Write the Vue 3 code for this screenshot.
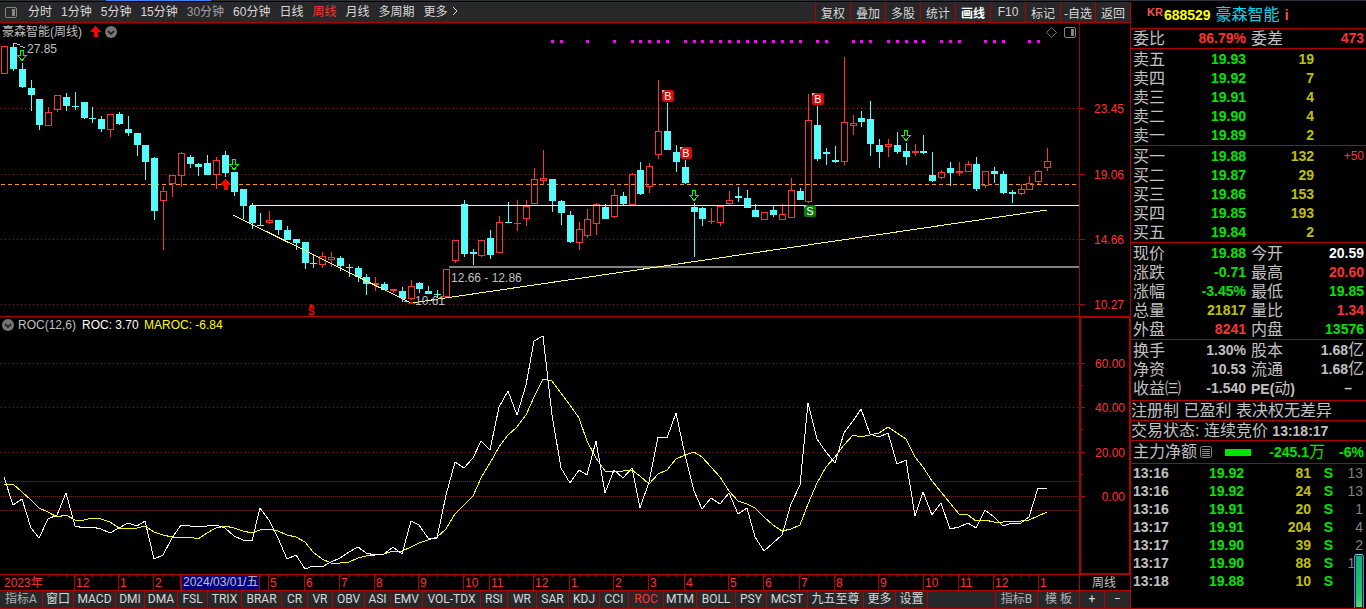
<script setup>
const periods = ['分时', '1分钟', '5分钟', '15分钟', '30分钟', '60分钟', '日线', '周线', '月线', '多周期']
const tools = ['复权', '叠加', '多股', '统计', '画线', 'F10', '标记', '-自选', '返回']

// Bar index to horizontal centre
const bx = (i) => Math.round(4 + i * 8.84)

// [rising, high, body top, body bottom, low]
const bars = [
  [1, 46, 46, 74, 74], [0, 44, 47, 69, 71], [0, 63, 69, 87, 88], [0, 80, 88, 95, 111], [0, 99, 99, 125, 130],
  [1, 107, 112, 126, 126], [1, 95, 95, 110, 112], [0, 93, 97, 106, 111], [0, 92, 106, 107, 110], [0, 102, 102, 118, 119],
  [0, 107, 118, 119, 123], [0, 116, 119, 129, 132], [1, 114, 114, 130, 137], [0, 112, 114, 124, 125], [0, 116, 129, 133, 136],
  [0, 133, 133, 145, 156], [0, 145, 145, 162, 180], [0, 157, 158, 211, 220], [1, 186, 191, 201, 250], [1, 175, 175, 184, 197],
  [1, 152, 153, 176, 187], [0, 155, 157, 164, 168], [0, 163, 164, 167, 176], [0, 155, 163, 175, 175], [1, 157, 160, 175, 189],
  [0, 151, 155, 173, 177], [0, 172, 172, 192, 196], [0, 189, 189, 206, 219], [0, 203, 206, 223, 229], [0, 213, 225, 226, 226],
  [1, 211, 220, 223, 224], [0, 220, 220, 230, 235], [0, 226, 230, 240, 240], [0, 239, 239, 243, 250], [0, 242, 242, 263, 269],
  [0, 254, 263, 264, 268], [1, 252, 256, 265, 268], [1, 252, 257, 260, 267], [0, 256, 258, 266, 271], [0, 264, 267, 268, 277],
  [0, 266, 268, 277, 282], [0, 274, 277, 284, 295], [1, 277, 283, 285, 291], [0, 282, 284, 290, 290], [1, 289, 289, 291, 293],
  [0, 287, 291, 298, 300], [1, 280, 286, 299, 300], [0, 282, 283, 289, 293], [0, 286, 291, 294, 294], [0, 290, 294, 295, 298],
  [1, 269, 269, 297, 297], [1, 240, 240, 261, 263], [0, 200, 204, 254, 257], [0, 249, 252, 254, 265], [1, 240, 240, 256, 257],
  [0, 230, 238, 255, 259], [1, 216, 222, 253, 253], [0, 202, 222, 223, 223], [1, 200, 223, 224, 231], [1, 200, 206, 219, 226],
  [1, 168, 179, 204, 204], [1, 150, 178, 181, 185], [0, 179, 179, 201, 212], [0, 200, 201, 213, 225], [0, 211, 215, 242, 243],
  [1, 222, 229, 243, 250], [1, 209, 219, 236, 238], [1, 203, 204, 224, 235], [0, 204, 207, 219, 219], [1, 189, 195, 217, 218],
  [0, 192, 196, 204, 205], [1, 173, 174, 205, 205], [0, 162, 170, 194, 195], [1, 163, 166, 187, 193], [1, 80, 131, 155, 159],
  [0, 103, 131, 150, 150], [0, 145, 152, 162, 172], [0, 160, 167, 183, 184], [0, 203, 207, 212, 257], [0, 207, 208, 219, 226],
  [1, 208, 221, 222, 224], [1, 205, 206, 223, 226], [1, 191, 200, 204, 206], [0, 187, 196, 198, 202], [0, 190, 198, 208, 208],
  [0, 204, 210, 217, 217], [1, 212, 212, 220, 220], [0, 206, 210, 215, 217], [1, 204, 214, 220, 220], [1, 178, 190, 218, 218],
  [0, 188, 191, 200, 200], [1, 94, 120, 202, 203], [0, 106, 125, 159, 161], [0, 148, 152, 154, 165], [0, 146, 160, 162, 163],
  [1, 57, 122, 162, 165], [1, 115, 123, 126, 135], [0, 111, 118, 122, 127], [0, 101, 119, 144, 156], [0, 139, 145, 152, 168],
  [1, 139, 144, 147, 157], [0, 132, 145, 152, 154], [0, 143, 151, 157, 165], [1, 144, 151, 153, 156], [0, 135, 151, 153, 154],
  [0, 152, 175, 181, 182], [1, 170, 172, 178, 179], [0, 162, 168, 173, 186], [1, 162, 171, 173, 176], [1, 161, 164, 172, 172],
  [0, 157, 164, 189, 191], [1, 171, 171, 186, 188], [0, 167, 171, 174, 183], [0, 171, 174, 193, 194], [0, 190, 192, 194, 203],
  [1, 184, 189, 194, 195], [1, 176, 183, 190, 190], [1, 170, 171, 182, 184], [1, 148, 161, 168, 171],
].map(([up, high, top, bottom, low], i) => ({ up, high, top, bottom, low, x: bx(i) }))

const roc = [477, 505, 499, 528, 538, 519, 515, 493, 526, 528, 527, 529, 533, 528, 523, 526, 521, 559, 555, 538,
  525, 526, 527, 526, 525, 528, 536, 540, 541, 508, 520, 538, 559, 555, 569, 566, 567, 562, 558, 552,
  547, 553, 555, 554, 547, 554, 521, 525, 538, 538, 495, 462, 468, 458, 441, 450, 407, 391, 415, 385,
  341, 336, 415, 468, 483, 470, 475, 441, 493, 470, 478, 468, 508, 482, 437, 438, 413, 455, 491, 509,
  498, 504, 493, 514, 508, 537, 551, 543, 535, 504, 485, 403, 439, 452, 463, 433, 421, 409, 434, 437,
  433, 464, 460, 516, 492, 515, 503, 529, 527, 523, 528, 510, 517, 526, 523, 523, 517, 488, 488]
const maroc = [485, 484, 492, 500, 508, 512, 517, 515, 520, 520, 518, 519, 522, 528, 528, 528, 526, 532, 535, 537,
  537, 537, 539, 533, 528, 526, 528, 531, 533, 530, 529, 531, 535, 537, 542, 552, 559, 563, 563, 562,
  558, 556, 555, 554, 551, 551, 547, 543, 540, 537, 529, 514, 505, 496, 478, 463, 447, 435, 427, 415,
  397, 379, 381, 393, 405, 418, 441, 458, 471, 472, 471, 470, 476, 484, 474, 470, 459, 455, 452, 457,
  467, 477, 491, 501, 504, 508, 517, 525, 531, 529, 525, 504, 483, 467, 457, 445, 435, 437, 435, 433,
  427, 433, 439, 457, 467, 481, 492, 503, 514, 515, 521, 520, 522, 522, 521, 521, 520, 516, 512]
const line = (values) => values.map((y, i) => `${bx(i)},${y}`).join(' ')

const signals = [62, 63, 66, 69, 71, 72, 73, 74, 75, 77, 78, 79, 80, 81, 82, 83, 84, 85, 86, 87, 88, 89, 90,
  92, 93, 96, 97, 98, 100, 101, 102, 103, 104, 106, 107, 108, 111, 112, 113, 116, 117]

const prices = [[108, '23.45'], [174, '19.06'], [239, '14.66'], [304, '10.27']]
const rocLevels = [[363, '60.00'], [407, '40.00'], [452, '20.00'], [496, '0.00']]
const badges = [[662, 90, 'B'], [680, 147, 'B'], [812, 93, 'B'], [804, 205, 'S']]
const downArrows = [[22, 50], [234, 159], [694, 190], [906, 130]]
const upArrows = [[95, 26], [225, 179]]

const months = [[74, '12'], [118, '1'], [153, '2'], [268, '5'], [304, '6'], [339, '7'], [374, '8'], [418, '9'],
  [463, '10'], [489, '11'], [533, '12'], [569, '1'], [613, '2'], [648, '3'], [684, '4'], [728, '5'], [763, '6'],
  [799, '7'], [834, '8'], [878, '9'], [923, '10'], [958, '11'], [993, '12'], [1038, '1']]

// [label, share of the bar's width]
const indicators = [['指标A', 43], ['窗口', 31], ['MACD', 42], ['DMI', 29], ['DMA', 33], ['FSL', 30], ['TRIX', 34],
  ['BRAR', 40], ['CR', 26], ['VR', 25], ['OBV', 32], ['ASI', 26], ['EMV', 32], ['VOL-TDX', 58], ['RSI', 27],
  ['WR', 29], ['SAR', 32], ['KDJ', 31], ['CCI', 29], ['ROC', 35], ['MTM', 33], ['BOLL', 39], ['PSY', 31],
  ['MCST', 41], ['九五至尊', 56], ['更多', 32], ['设置', 32], ['', 68], ['指标B', 42], ['模 板', 42], ['+', 25], ['−', 25]]
const indicatorColumns = indicators.map(([, w]) => `${w}fr`).join(' ')

const asks = [['卖五', '19.93', '19'], ['卖四', '19.92', '7'], ['卖三', '19.91', '4'], ['卖二', '19.90', '4'], ['卖一', '19.89', '2']]
const bids = [['买一', '19.88', '132', '+50'], ['买二', '19.87', '29'], ['买三', '19.86', '153'], ['买四', '19.85', '193'], ['买五', '19.84', '2']]
const books = [asks, bids]

const quotes = [
  ['现价', '19.88', 'green', '今开', '20.59', 'white'],
  ['涨跌', '-0.71', 'green', '最高', '20.60', 'red'],
  ['涨幅', '-3.45%', 'green', '最低', '19.85', 'green'],
  ['总量', '21817', 'yellow', '量比', '1.34', 'red'],
  ['外盘', '8241', 'red', '内盘', '13576', 'green'],
]
const ticks = [['13:16', '19.92', '81', '13'], ['13:16', '19.92', '24', '13'], ['13:16', '19.91', '20', '1'],
  ['13:17', '19.91', '204', '4'], ['13:17', '19.90', '39', '2'], ['13:17', '19.90', '88', '12'], ['13:18', '19.88', '10', '']]
</script>

<template>
  <div class="app">
    <div class="strip"><i></i></div>
    <div class="body">
      <main class="main">
        <nav class="toolbar">
          <div class="periods">
            <button class="plain" aria-label="侧栏">
              <svg width="12" height="11" viewBox="0 0 12 11"><rect x=".5" y=".5" width="11" height="10" rx="1.5" fill="none" stroke="#858585" /><rect x="7" y="2" width="3" height="7" fill="#858585" /></svg>
            </button>
            <button v-for="p in periods" :key="p" class="plain" :class="{ active: p === '周线', dim: p === '30分钟' }">{{ p }}</button>
            <button class="plain more">更多<svg width="6" height="10" viewBox="0 0 6 10"><path d="M1 1l4 4-4 4" fill="none" stroke="#d8d8d8" /></svg></button>
          </div>
          <div class="tools">
            <button v-for="t in tools" :key="t" :class="{ strong: t === '画线' }">{{ t }}</button>
          </div>
        </nav>

        <svg class="chart" viewBox="0 23 1130 294" role="img" aria-label="周线K线图">
          <g class="crisp">
            <line v-for="p in prices" :key="p[0]" class="grid" x1="1" x2="1079" :y1="p[0] + 0.5" :y2="p[0] + 0.5" />
            <line class="last" x1="1" x2="1079" y1="184.5" y2="184.5" />
            <rect x="449" y="266" width="630" height="2" fill="#808080" />
            <g v-for="b in bars" :key="b.x" :class="b.up ? 'up' : 'down'">
              <rect v-if="b.high < b.top" :x="b.x" :y="b.high" width="1" :height="b.top - b.high" />
              <rect v-if="b.low > b.bottom" :x="b.x" :y="b.bottom" width="1" :height="b.low - b.bottom" />
              <rect v-if="!b.up || b.bottom - b.top < 3" :x="b.x - 3" :y="b.top" width="7" :height="b.bottom - b.top" />
              <rect v-else class="hollow" :x="b.x - 2.5" :y="b.top + 0.5" width="6" :height="b.bottom - b.top - 1" />
            </g>
            <line class="trend" x1="250" x2="1079" y1="205.5" y2="205.5" />
            <polyline class="trend" points="233,215 411,303 1047,210" />
            <rect v-for="s in signals" :key="s" :x="bx(s) - 1" y="40" width="3" height="3" fill="#f0f" />
            <path class="frame" d="M0 316.5H1130M1079.5 23V316M1080 108.5h5M1080 174.5h5M1080 239.5h5M1080 304.5h5" />
            <path d="M14 43.5h3M13.500 43v3M17 44.500h3M20 46.500h3M23 47.500h2M402.500 298v4M402 298.500h4M404 301.500h3" stroke="#c0c0c0" fill="none" />
            <path d="M408 303.500h7M410 302.500h3" stroke="red" fill="none" />
            <path v-for="a in downArrows" :key="a[0]" :transform="`translate(${a[0]} ${a[1]})`" d="M-1.500 .5h3v5h3l-4.500 5-4.500-5h3z" fill="none" stroke="#0f0" />
            <path v-for="a in upArrows" :key="a[0]" :transform="`translate(${a[0]} ${a[1]})`" d="M0 0h1l4.500 5v1h-3v5h-4v-5h-3v-1z" fill="red" />
            <path d="M311 304h1l2 3h-5z" fill="red" />
          </g>
          <text x="308" y="315" class="dollar">S</text>
          <text x="2" y="36" class="grey">豪森智能(周线)</text>
          <circle cx="111" cy="32" r="6" fill="#757575" />
          <path d="M108 31l3 3 3-3" fill="none" stroke="#111" stroke-width="1.500" />
          <text x="27" y="53" class="grey">27.85</text>
          <text x="451" y="282" class="grey">12.66 - 12.86</text>
          <text x="415" y="305" class="grey">10.61</text>
          <g v-for="b in badges" :key="b[0]">
            <rect :x="b[0]" :y="b[1]" width="12" height="12" rx="2" :fill="b[2] === 'B' ? '#dc0808' : '#0a7a0a'" />
            <path :d="`M${b[0]} ${b[1] + 3}v-3h3z`" fill="#ccc" />
            <text :x="b[0] + 6" :y="b[1] + 10" class="badge">{{ b[2] }}</text>
          </g>
          <path d="M1051.500 27.500l5 5-5 5-5-5z" fill="none" stroke="#777" />
          <rect x="1064.500" y="27.500" width="11" height="10" rx="1.500" fill="none" stroke="#858585" />
          <rect x="1071" y="29" width="3" height="7" fill="#858585" />
          <text v-for="p in prices" :key="p[1]" x="1124" :y="p[0] + 5" class="axis">{{ p[1] }}</text>
        </svg>

        <svg class="chart" viewBox="0 317 1130 257" role="img" aria-label="ROC指标图">
          <g class="crisp">
            <line v-for="p in rocLevels.slice(0, 3)" :key="p[0]" class="grid" x1="1" x2="1079" :y1="p[0] + 0.5" :y2="p[0] + 0.5" />
            <line v-for="y in [481.5, 496.5, 510.5]" :key="y" class="grid dense" x1="1" x2="1079" :y1="y" :y2="y" />
            <polyline :points="line(maroc)" class="curve" stroke="#ff0" />
            <polyline :points="line(roc)" class="curve" stroke="#fff" />
            <path class="frame" d="M1079.500 317V574M1080.500 317V574M1080 317.500H1130M1080 573.500H1130M1129.500 317V574M1081 385.500h2M1081 429.500h2M1081 474.500h2" />
            <path v-for="p in rocLevels" :key="p[1]" class="frame" :d="`M1081 ${p[0] + 0.5}h4`" />
          </g>
          <circle cx="8" cy="325" r="6" fill="#757575" />
          <path d="M5 324l3 3 3-3" fill="none" stroke="#111" stroke-width="1.500" />
          <text x="18" y="329" class="grey">ROC(12,6)</text>
          <text x="82" y="329" fill="#fff">ROC: 3.70</text>
          <text x="144" y="329" fill="#ff0">MAROC: -6.84</text>
          <text v-for="p in rocLevels" :key="p[1]" x="1125" :y="p[0] + 5" class="axis">{{ p[1] }}</text>
        </svg>

        <svg class="chart" viewBox="0 574 1130 17" role="img" aria-label="日期轴">
          <g class="crisp">
            <path class="frame" d="M0 574.500H1130M0 590.500H1130M1079.500 574V590M180.500 574V590M181.500 574V590M259.500 574V590" />
            <path v-for="i in 112" :key="i" class="frame" :d="`M${bx(i + 4) + 0.5} 575v2`" />
            <path v-for="m in months" :key="m[0]" class="frame" :d="`M${m[0] + 0.5} 575V590`" />
            <rect x="182" y="575" width="77" height="14" fill="#000080" />
          </g>
          <text x="4" y="587" class="red-text">2023年</text>
          <text x="183" y="586" class="grey">2024/03/01/五</text>
          <text v-for="m in months" :key="m[0]" :x="m[0] + 2" y="587" class="red-text">{{ m[1] }}</text>
          <text x="1104" y="587" class="grey mid">周线</text>
        </svg>

        <nav class="indicators" :style="{ gridTemplateColumns: indicatorColumns }">
          <template v-for="t in indicators" :key="t[0]">
            <button v-if="t[0]" :class="{ active: t[0] === 'ROC', muted: ['指标A', '指标B', '模 板'].includes(t[0]) }">{{ t[0] }}</button>
            <span v-else></span>
          </template>
        </nav>
      </main>

      <aside class="side">
        <header class="title">
          <sup>KR</sup><b>688529</b><span class="name">豪森智能</span><b class="info">i</b>
        </header>
        <section class="flat">
          <table class="pair"><tbody><tr>
            <th>委比</th><td class="red">86.79%</td><th>委差</th><td class="red">473</td>
          </tr></tbody></table>
        </section>
        <section v-for="(book, n) in books" :key="n">
          <table class="book"><tbody>
            <tr v-for="r in book" :key="r[0]">
              <th>{{ r[0] }}</th><td class="green">{{ r[1] }}</td><td class="yellow">{{ r[2] }}</td><td class="change">{{ r[3] }}</td>
            </tr>
          </tbody></table>
        </section>
        <section>
          <table class="pair"><tbody>
            <tr v-for="q in quotes" :key="q[0]">
              <th>{{ q[0] }}</th><td :class="q[2]">{{ q[1] }}</td><th>{{ q[3] }}</th><td :class="q[5]">{{ q[4] }}</td>
            </tr>
          </tbody></table>
        </section>
        <section class="basics">
          <table class="pair"><tbody>
            <tr><th>换手</th><td>1.30%</td><th>股本</th><td>1.68<span>亿</span></td></tr>
            <tr><th>净资</th><td>10.53</td><th>流通</th><td>1.68<span>亿</span></td></tr>
            <tr><th>收益㈢</th><td>-1.540</td><th><b>PE(</b>动<b>)</b></th><td class="none">–</td></tr>
          </tbody></table>
        </section>
        <p class="note">注册制 已盈利 表决权无差异</p>
        <p class="note">交易状态: 连续竞价 <b>13:18:17</b></p>
        <div class="flow">
          <span class="flow-name">主力净额</span>
          <svg width="12" height="12" viewBox="0 0 12 12"><rect x=".5" y=".5" width="11" height="11" rx="2" fill="none" stroke="#888" /><path d="M2 3.500h8M2 5.500h8M2 7.500h8M2 9.500h8" stroke="#888" /></svg>
          <i class="flow-bar"></i>
          <b class="amount">-245.1<span>万</span></b>
          <b class="ratio">-6%</b>
        </div>
        <div class="ticks">
          <table><tbody>
            <tr v-for="(t, n) in ticks" :key="n">
              <td class="time">{{ t[0] }}</td><td class="green">{{ t[1] }}</td><td class="yellow">{{ t[2] }}</td><td class="flag">S</td><td class="count">{{ t[3] }}</td>
            </tr>
          </tbody></table>
          <i class="thumb"></i>
        </div>
      </aside>
    </div>
  </div>
</template>

<style>
body {
  background: #000;
}
</style>

<style scoped>
.app {
  min-height: 100vh;
  display: flex;
  flex-direction: column;
  background: #000;
  color: #c0c0c0;
  font: 12px "Liberation Sans", "Noto Sans CJK SC", sans-serif;
}
.strip {
  height: 1px;
  margin-bottom: 1px;
  background: #2b303a;
}
.strip i {
  display: block;
  width: 105px;
  height: 1px;
  margin-left: 106px;
  background: #3a86ff;
}
.body {
  flex: 1;
  display: flex;
}
.main {
  flex: 1;
  min-width: 0;
  display: flex;
  flex-direction: column;
}
button {
  margin: 0;
  padding: 0;
  border: 0;
  background: none;
  color: #d8d8d8;
  font: inherit;
  white-space: nowrap;
}
.toolbar {
  height: 20px;
  display: flex;
  justify-content: space-between;
  background: #28282b;
  border-bottom: 1px solid #b00000;
}
.periods {
  display: flex;
  align-items: center;
  gap: 9px;
  padding-left: 5px;
}
.periods .plain {
  line-height: 20px;
}
.periods .plain:first-child {
  display: flex;
  margin-right: 2px;
}
.more svg {
  margin-left: 4px;
}
.toolbar .active,
.indicators .active {
  color: #ff3232;
}
.toolbar .dim {
  color: #a0a0a0;
}
.tools {
  display: flex;
}
.tools button {
  width: 35px;
  border-left: 1px solid #b00000;
}
.tools .strong {
  color: #fff;
  font-weight: bold;
}
.chart {
  display: block;
  width: 100%;
}
.crisp {
  shape-rendering: crispEdges;
}
.grid {
  stroke: #a01010;
  stroke-dasharray: 1 3;
}
.dense {
  stroke-dasharray: 1 1;
}
.last {
  stroke: #ff9614;
  stroke-dasharray: 4 3;
}
.up {
  fill: #ff3232;
}
.down {
  fill: #54fcfc;
}
.hollow {
  fill: none;
  stroke: #ff3232;
}
.trend {
  fill: none;
  stroke: #ffff80;
}
.curve {
  fill: none;
}
.frame {
  fill: none;
  stroke: #b00000;
}
.grey {
  fill: #c0c0c0;
}
.axis {
  fill: #ff3232;
  text-anchor: end;
}
.red-text {
  fill: #ff3232;
}
.mid {
  text-anchor: middle;
}
.badge {
  fill: #fff;
  font-size: 11px;
  text-anchor: middle;
}
.dollar {
  fill: red;
  font-size: 10px;
  font-weight: bold;
}
.indicators {
  display: grid;
  height: 17px;
  background: #28282b;
  border-bottom: 1px solid #b00000;
  font-family: Roboto, "Noto Sans CJK SC", sans-serif;
}
.indicators > * {
  min-width: 0;
  line-height: 17px;
  border-right: 1px solid #b00000;
}
.indicators > :last-child {
  border-right: 0;
}
.indicators .muted {
  color: #b0b0b0;
}
.side {
  width: 235px;
  flex: none;
  display: flex;
  flex-direction: column;
  border-left: 1px solid #b00000;
}
.title {
  height: 26px;
  display: flex;
  align-items: center;
  padding-left: 16px;
  border-bottom: 1px solid #b00000;
  font-size: 14px;
  color: #ff0;
}
.title sup {
  margin-right: 1px;
  padding-bottom: 6px;
  color: #ff5050;
  font-size: 11px;
  font-weight: bold;
  line-height: 12px;
}
.title .name {
  margin: 0 5px;
  color: #00d8f0;
  font-size: 16px;
  line-height: 20px;
}
.title .info {
  color: #ff5050;
}
section {
  padding: 1px 2px 0;
  border-bottom: 1px solid #b00000;
}
.flat {
  padding-top: 0;
}
.basics {
  padding-bottom: 2px;
}
table {
  width: 100%;
  table-layout: fixed;
  border-collapse: collapse;
}
th,
td {
  height: 19px;
  padding: 0;
  line-height: 19px;
  white-space: nowrap;
}
th {
  width: 48px;
  text-align: left;
  font-size: 16px;
  font-weight: normal;
}
td {
  text-align: right;
  font-size: 14px;
  font-weight: bold;
}
th b {
  font-size: 14px;
  line-height: 1;
}
td span,
.amount span {
  font-size: 16px;
  font-weight: normal;
  line-height: 1;
}
.pair td:nth-child(2) {
  width: 65px;
}
.pair th:nth-child(3) {
  padding-left: 5px;
}
.book td:nth-child(2) {
  width: 65px;
}
.book td:nth-child(3) {
  width: 68px;
}
.book .change {
  color: #ff3232;
  font-size: 12px;
  font-weight: normal;
}
.pair .none {
  padding-right: 12px;
}
.green {
  color: #00e600;
}
.red {
  color: #ff3232;
}
.yellow {
  color: #c0c000;
}
.white {
  color: #fff;
}
.note {
  height: 19px;
  margin: 0;
  overflow: hidden;
  border-bottom: 1px solid #b00000;
  font-size: 16px;
  line-height: 19px;
  white-space: nowrap;
}
.note b {
  font-size: 14px;
}
.flow {
  height: 22px;
  display: flex;
  align-items: center;
  padding: 0 2px;
  border-bottom: 1px solid #b00000;
  color: #00e600;
  font-size: 14px;
}
.flow-name {
  margin-right: 3px;
  color: #c0c0c0;
  font-size: 16px;
  line-height: 20px;
}
.flow-bar {
  width: 26px;
  height: 7px;
  margin-left: 13px;
  background: #00e600;
}
.amount {
  flex: 1;
  text-align: right;
}
.ratio {
  width: 39px;
  text-align: right;
}
.ticks {
  position: relative;
  flex: 1;
  padding: 0 3px 0 2px;
  border-bottom: 1px solid #b00000;
}
.ticks td {
  height: 18px;
  line-height: 18px;
}
.ticks .time {
  width: 48px;
  text-align: left;
}
.ticks .green {
  width: 63px;
}
.ticks .yellow {
  width: 67px;
}
.ticks .flag {
  width: 22px;
  color: #00e600;
}
.ticks .count {
  color: #808080;
  font-weight: normal;
}
.thumb {
  position: absolute;
  right: 2px;
  bottom: 0;
  box-sizing: border-box;
  width: 10px;
  height: 54px;
  border: 1px solid #6c7cf0;
  border-top-color: #78d0ff;
  border-bottom: 0;
  border-radius: 3px 3px 0 0;
  background: linear-gradient(#10b070, #28c860 80%, #60e060);
  box-shadow: inset 0 0 0 1px #002040;
}
</style>
